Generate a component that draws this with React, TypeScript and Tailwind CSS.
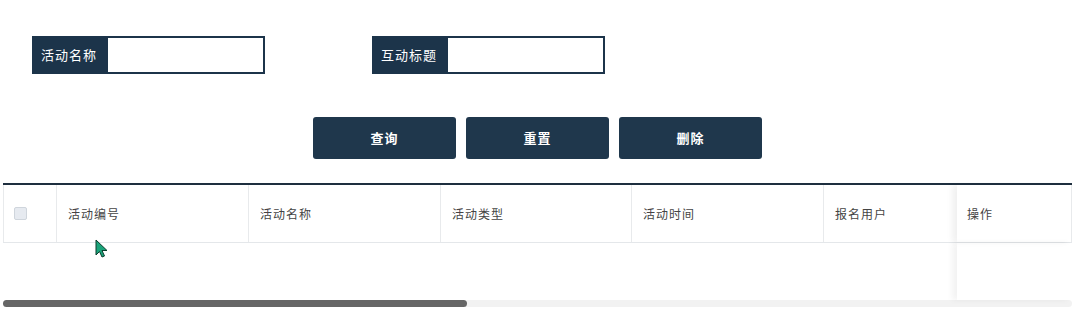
import React from "react";

const font = { fontFamily: '"Noto Sans CJK SC", "Noto Sans", sans-serif' };

function Field({ label }: { label: string }) {
  return (
    <div className="flex h-[38px] w-[233px]">
      <div className="flex w-[74px] shrink-0 items-center justify-center bg-[#1c344a] text-[13px] tracking-[1px] text-white">
        {label}
      </div>
      <input className="h-full min-w-0 flex-1 border-2 border-[#1c344a] bg-white outline-none" />
    </div>
  );
}

const columns = [
  { title: "活动编号", w: "w-[192px]" },
  { title: "活动名称", w: "w-[192px]" },
  { title: "活动类型", w: "w-[191px]" },
  { title: "活动时间", w: "w-[192px]" },
  { title: "报名用户", w: "w-[134px]" },
];

export default function App() {
  return (
    <div className="relative h-[326px] w-[1081px] overflow-hidden bg-white" style={font}>
      <div className="flex gap-[107px] pl-[32px] pt-[36px]">
        <Field label="活动名称" />
        <Field label="互动标题" />
      </div>

      <div className="mt-[43px] flex gap-[10px] pl-[313px]">
        {["查询", "重置", "删除"].map((t) => (
          <button
            key={t}
            className="h-[42px] w-[143px] rounded-[3px] bg-[#1f374c] text-[13px] font-bold tracking-[1px] text-white"
          >
            {t}
          </button>
        ))}
      </div>

      <div className="ml-[3px] mt-[24px] w-[1069px]">
        <div className="flex h-[60px] border-t-2 border-b border-t-[#1e2f3f] border-b-[#e4e7ea]">
          <div className="flex w-[53px] shrink-0 items-center border-l border-[#e8eaec] pl-[10px]">
            <span className="block h-[13px] w-[13px] rounded-[2px] border border-[#cfd5dc] bg-[#e6eaf0]" />
          </div>
          {columns.map((c) => (
            <div
              key={c.title}
              className={`${c.w} flex shrink-0 items-center border-l border-[#e8eaec] pl-[11px] text-[12px] tracking-[1px] text-[#444]`}
            >
              {c.title}
            </div>
          ))}
          <div className="flex w-[115px] shrink-0 items-center border-r border-[#e8eaec] pl-[10px] text-[12px] tracking-[1px] text-[#444] shadow-[-5px_0_6px_rgba(0,0,0,0.06)]">
            操作
          </div>
        </div>
        <div className="flex h-[57px]">
          <div className="flex-1" />
          <div className="w-[115px] shadow-[-5px_0_6px_rgba(0,0,0,0.05)]" />
        </div>
        <div className="h-[7px] w-full rounded-full bg-[#f2f2f2]">
          <div className="h-[7px] w-[464px] rounded-full bg-[#666]" />
        </div>
      </div>

      <svg className="absolute left-[95px] top-[239px]" width="14" height="20" viewBox="0 0 14 20">
        <path d="M1 1 L1 16 L4.5 12.5 L7 18 L9.5 17 L7 11.5 L12 11.5 Z" fill="#1aa37a" stroke="#0b3d2c" strokeWidth="1" />
      </svg>
    </div>
  );
}
